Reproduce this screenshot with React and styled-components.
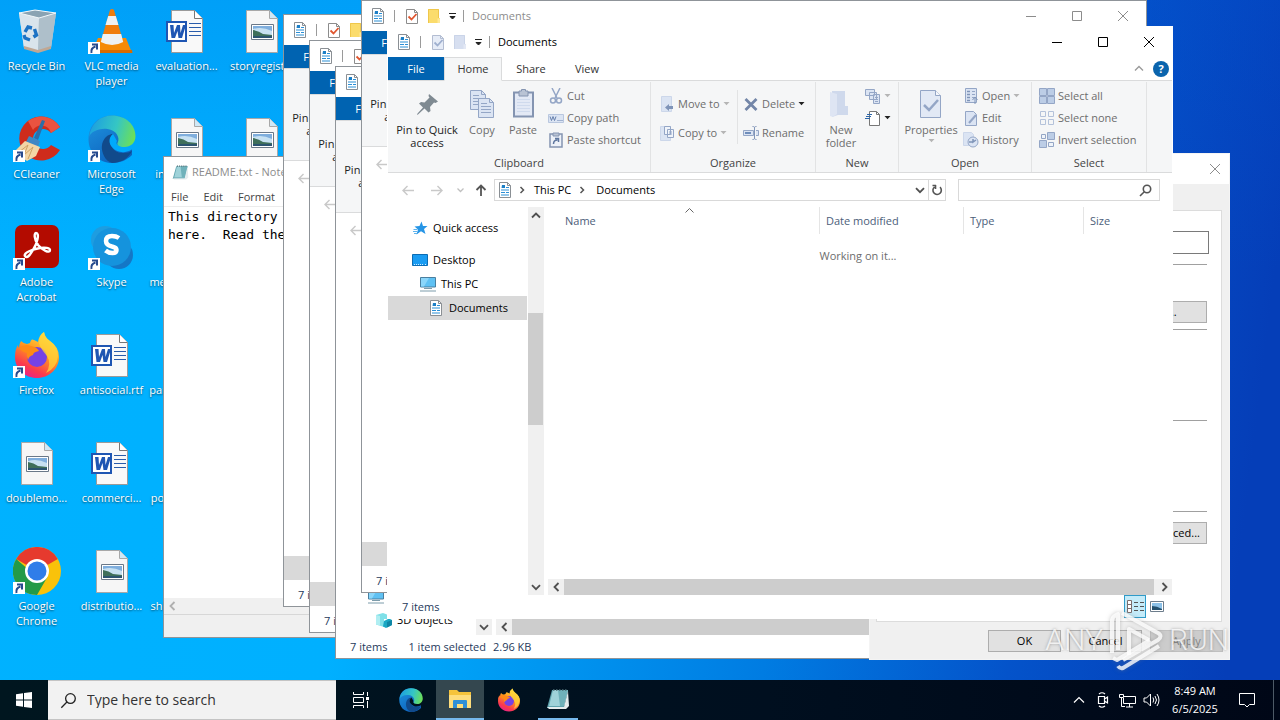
import React from 'react';
import styled, { createGlobalStyle } from 'styled-components';

const GlobalStyle = createGlobalStyle`
  * {
    box-sizing: border-box;
  }

  body {
    margin: 0;
    overflow: hidden;
    font-family: 'Open Sans', 'Noto Sans', sans-serif;
    font-size: 11px;
    line-height: 16px;
    color: #000;
  }

  button,
  input,
  textarea {
    font: inherit;
    color: inherit;
    margin: 0;
    padding: 0;
    border: 0;
    background: none;
    outline: none;
  }

  svg {
    display: block;
    flex: none;
  }
`;

/* ---------- desktop ---------- */

const Screen = styled.div`
  height: 100vh;
  display: flex;
  flex-direction: column;
`;

const Desktop = styled.main`
  position: relative;
  flex: 1;
  min-height: 0;
  overflow: hidden;
  background:
    linear-gradient(180deg, rgba(0, 90, 220, 0.2), rgba(0, 90, 220, 0) 40%),
    linear-gradient(97deg, #00b2ff 0%, #00b0ff 30%, #007ce2 62%, #0453ca 80%, #053eb8 96%);
`;

const IconGrid = styled.div`
  display: grid;
  grid-auto-flow: column;
  grid-template-rows: repeat(6, 108px);
  grid-auto-columns: 75px;
  width: max-content;
`;

const Shortcut = styled.button`
  position: relative;
  display: flex;
  flex-direction: column;
  align-items: center;
  gap: 3px;
  padding: 7px 2px 0 0;
  color: #fff;
  line-height: 15px;
  text-shadow: 0 1px 2px rgba(0, 0, 0, 0.6);

  span {
    white-space: pre;
  }
`;

const ShortcutArrow = styled.svg`
  position: absolute;
  left: 13px;
  top: 42px;
`;

/* ---------- window frame ---------- */

const Frame = styled.section`
  position: absolute;
  left: ${({ $x }) => $x}px;
  top: ${({ $y }) => $y}px;
  width: ${({ $w }) => $w}px;
  height: ${({ $h }) => $h}px;
  display: flex;
  flex-direction: column;
  overflow: hidden;
  background: #fff;
  border: 1px solid ${({ $edge }) => $edge || '#8f9499'};
`;

const TitleBar = styled.header`
  display: flex;
  align-items: center;
  flex: none;
  height: 30px;
  color: ${({ $active }) => ($active ? '#000' : '#8c8c8c')};
`;

const QuickBar = styled.div`
  display: flex;
  align-items: center;
  padding-left: 8px;
`;

const QuickSlot = styled.button`
  display: flex;
  justify-content: center;
  width: ${({ $w }) => $w}px;
`;

const Bar = styled.i`
  width: 1px;
  height: ${({ $h }) => $h || 12}px;
  background: ${({ $c }) => $c || '#9a9a9a'};
`;

const WindowTitle = styled.h2`
  flex: 1;
  margin: 0;
  padding-left: 3px;
  font-size: 11px;
  font-weight: 400;
  white-space: nowrap;
`;

const Caption = styled.button`
  display: flex;
  justify-content: center;
  align-items: center;
  width: 46px;
  height: 29px;
`;

/* ---------- ribbon ---------- */

const Tabs = styled.nav`
  display: flex;
  flex: none;
  height: 24px;
  border-bottom: 1px solid #dadbdc;
  color: #333;
`;

const Tab = styled.button`
  width: ${({ $w }) => $w}px;
  height: 24px;
  ${({ $kind }) => $kind === 'file' && 'background: #0063b1; color: #fff; height: 23px;'}
  ${({ $kind }) =>
    $kind === 'open' && 'background: #f5f6f7; border: 1px solid #dadbdc; border-bottom-color: #f5f6f7;'}
`;

const TabEnd = styled.div`
  display: flex;
  align-items: center;
  gap: 9px;
  margin-left: auto;
  padding-right: 3px;
`;

const Help = styled.button`
  width: 16px;
  height: 16px;
  border-radius: 50%;
  background: #0a64ad;
  color: #fff;
  font-weight: 700;
  line-height: 16px;
`;

const RibbonBody = styled.div`
  display: flex;
  flex: none;
  height: 92px;
  padding-top: 1px;
  background: #f5f6f7;
  border-bottom: 1px solid #dadbdc;
`;

const Group = styled.div`
  display: flex;
  flex-direction: column;
  flex: none;
  width: ${({ $w }) => $w}px;
  border-right: 1px solid #e2e3e4;

  h3 {
    margin: 0;
    font-size: 11px;
    font-weight: 400;
    text-align: center;
    color: #444;
  }
`;

const Tools = styled.div`
  display: flex;
  height: 73px;
  padding-left: ${({ $pad }) => $pad || 2}px;
`;

const BigTool = styled.button`
  display: flex;
  flex-direction: column;
  align-items: center;
  width: ${({ $w }) => $w}px;
  padding-top: 6px;
  gap: 3px;
  line-height: 13px;
  color: ${({ $on }) => ($on ? '#222' : '#6d6d6d')};

  span {
    white-space: pre;
  }
`;

const ToolColumn = styled.div`
  display: flex;
  flex-direction: column;
  padding-top: ${({ $tall }) => ($tall ? 7 : 3)}px;
  margin-left: ${({ $gap }) => $gap || 0}px;
  width: ${({ $w }) => ($w ? `${$w}px` : 'auto')};

  button {
    display: flex;
    align-items: center;
    gap: 3px;
    height: ${({ $tall }) => ($tall ? 29 : 22)}px;
    color: #6d6d6d;
    white-space: nowrap;
  }
`;

const ToolDivider = styled.i`
  width: 1px;
  height: 54px;
  margin-top: 8px;
  background: #e2e3e4;
`;

/* ---------- address bar ---------- */

const AddressRow = styled.div`
  display: flex;
  align-items: center;
  flex: none;
  height: 34px;
  padding: 0 12px 0 5px;
`;

const NavArrow = styled.button`
  display: flex;
  justify-content: center;
  width: ${({ $w }) => $w}px;
`;

const Crumbs = styled.div`
  display: flex;
  align-items: center;
  flex: 1;
  height: 22px;
  margin: 0 12px 0 2px;
  padding-left: 2px;
  border: 1px solid #d9d9d9;
`;

const Crumb = styled.button`
  padding-left: 3px;
`;

const CrumbTail = styled.div`
  display: flex;
  align-items: center;
  height: 20px;
  margin-left: auto;

  button {
    display: flex;
    align-items: center;
    justify-content: center;
    width: 17px;
    height: 20px;
  }

  button + button {
    border-left: 1px solid #d9d9d9;
  }
`;

const SearchBox = styled.label`
  display: flex;
  align-items: center;
  width: 202px;
  height: 22px;
  padding-right: 7px;
  border: 1px solid #d9d9d9;

  input {
    flex: 1;
    min-width: 0;
  }
`;

/* ---------- explorer body ---------- */

const Body = styled.div`
  display: flex;
  flex: 1;
  min-height: 0;
`;

const Tree = styled.ul`
  display: flex;
  flex-direction: column;
  justify-content: ${({ $end }) => ($end ? 'flex-end' : 'flex-start')};
  width: 139px;
  margin: 0;
  padding: ${({ $end }) => ($end ? '0 0 3px' : '9px 0 0')};
  list-style: none;
`;

const TreeRow = styled.li`
  display: flex;
  align-items: center;
  gap: 5px;
  height: 24px;
  flex: none;
  margin-bottom: ${({ $space }) => ($space ? 8 : 0)}px;
  padding-left: ${({ $level }) => 24 + $level * 8}px;
  background: ${({ $selected }) => ($selected ? '#d9d9d9' : 'transparent')};
  white-space: nowrap;
`;

const VScroll = styled.div`
  display: flex;
  flex-direction: column;
  justify-content: space-between;
  width: 16px;
  margin-left: 1px;
  background: #f0f0f0;
`;

const HScroll = styled.div`
  display: flex;
  flex: none;
  height: 16px;
  margin-left: ${({ $gap }) => $gap}px;
  background: #f0f0f0;
`;

const ScrollArrow = styled.button`
  display: flex;
  align-items: center;
  justify-content: center;
  width: 16px;
  height: 16px;
`;

const VTrack = styled.div`
  flex: 1;
  padding-top: 90px;
`;

const Thumb = styled.div`
  background: #cdcdcd;
  ${({ $h }) => ($h ? `height: ${$h}px; width: 15px;` : 'flex: 1; margin-right: 2px;')}
`;

const Pane = styled.div`
  display: flex;
  flex-direction: column;
  flex: 1;
  min-width: 0;
`;

const Listing = styled.div`
  position: relative;
  flex: 1;

  p {
    margin: 14px 0 0;
    text-align: center;
    color: #6d6d6d;
  }
`;

const Columns = styled.table`
  width: 100%;
  table-layout: fixed;
  border-collapse: separate;
  border-spacing: 0;
`;

const Heading = styled.th`
  width: ${({ $w }) => ($w ? `${$w}px` : 'auto')};
  height: 27px;
  padding: 0 0 0 ${({ $first }) => ($first ? 21 : 6)}px;
  font-weight: 400;
  text-align: left;
  color: #4c607a;
  border-right: ${({ $w }) => ($w ? '1px solid #e5e5e5' : 0)};
`;

const SortMark = styled.svg`
  position: absolute;
  left: 141px;
  top: 1px;
`;

const Status = styled.footer`
  display: flex;
  align-items: center;
  flex: none;
  height: 23px;
  padding: 0 4px 0 14px;
  gap: 21px;
  color: #1e395b;

  div {
    display: flex;
    align-items: center;
    margin-left: auto;
  }
`;

const Selection = styled.span`
  display: flex;
  gap: 7px;
`;

const ViewButton = styled.button`
  display: flex;
  align-items: center;
  justify-content: center;
  width: 22px;
  height: 23px;
  ${({ $on }) => $on && 'background: #c4ebf9; border: 1px solid #2f9bc9;'}
`;

/* ---------- notepad ---------- */

const MenuBar = styled.nav`
  display: flex;
  align-items: center;
  flex: none;
  gap: 15px;
  height: 20px;
  padding-left: 7px;
  border-bottom: 1px solid #ececec;
  color: #444;
`;

const NoteText = styled.textarea`
  flex: 1;
  padding: 1px 4px;
  resize: none;
  overflow: hidden;
  font-family: 'DejaVu Sans Mono', monospace;
  font-size: 13px;
  line-height: 18px;
  white-space: pre;
`;

const NoteStatus = styled.div`
  flex: none;
  height: 23px;
  background: #f0f0f0;
  border-top: 1px solid #d7d7d7;
`;

/* ---------- properties dialog ---------- */

const DialogTabs = styled.div`
  flex: none;
  height: 26px;
  background: #f0f0f0;
`;

const Sheet = styled.div`
  display: flex;
  flex-direction: column;
  flex: 1;
  margin: 0 7px 0 6px;
  padding: 20px 14px 0 12px;
  border: 1px solid #dcdcdc;
  background: #fff;
`;

const SheetWrap = styled.div`
  display: flex;
  flex: 1;
  background: #f0f0f0;
`;

const NameInput = styled.input`
  height: 23px;
  margin-right: -2px;
  border: 1px solid #7a7a7a;
`;

const Rule = styled.hr`
  width: 100%;
  height: 1px;
  margin: ${({ $top }) => $top}px 0 0;
  border: 0;
  background: #a0a0a0;
`;

const PushButton = styled.button`
  flex: none;
  width: ${({ $w }) => $w || 73}px;
  height: 22px;
  border: 1px solid ${({ disabled }) => (disabled ? '#bfbfbf' : '#adadad')};
  background: ${({ disabled }) => (disabled ? '#cccccc' : '#e1e1e1')};
  color: ${({ disabled }) => (disabled ? '#838383' : '#000')};
`;

const SheetButton = styled(PushButton)`
  align-self: flex-end;
  margin-top: ${({ $top }) => $top}px;
`;

const DialogFooter = styled.footer`
  display: flex;
  justify-content: flex-end;
  flex: none;
  gap: 8px;
  height: 37px;
  padding: 8px 6px 0 0;
  background: #f0f0f0;
`;

/* ---------- watermark ---------- */

const Watermark = styled.div`
  position: absolute;
  right: 51px;
  bottom: 8px;
  display: flex;
  align-items: center;
  gap: 6px;
  height: 64px;
  font-family: Roboto, sans-serif;
  font-size: 30px;
  font-weight: 300;
  line-height: 64px;
  color: rgba(255, 255, 255, 0.8);
  text-shadow: 0 0 3px rgba(110, 110, 110, 0.6);
  pointer-events: none;
`;

const PlayMark = styled.svg`
  filter: drop-shadow(0 0 2px rgba(120, 120, 120, 0.5));
`;

/* ---------- taskbar ---------- */

const Taskbar = styled.footer`
  display: flex;
  flex: none;
  height: 40px;
  color: #fff;
  background: linear-gradient(90deg, #00161f, #000f1f 60%, #000717);
`;

const TaskButton = styled.button`
  display: flex;
  align-items: center;
  justify-content: center;
  width: ${({ $w }) => $w}px;
  margin-left: ${({ $gap }) => $gap || 0}px;
  background: ${({ $active }) => ($active ? '#34474f' : 'transparent')};
  border-bottom: ${({ $open }) => ($open ? '2px solid #76b9ed' : '0')};
`;

const TaskSearch = styled.label`
  display: flex;
  align-items: center;
  gap: 10px;
  width: 288px;
  padding-left: 12px;
  background: #f2f2f2;
  border: 1px solid #c4c4c4;
  border-width: 1px 0;

  input {
    flex: 1;
    min-width: 0;
    font-size: 14px;
  }

  input::placeholder {
    color: #333;
    opacity: 1;
  }
`;

const Tray = styled.div`
  display: flex;
  align-items: center;
  margin-left: auto;
`;

const TrayButton = styled.button`
  display: flex;
  justify-content: center;
  width: ${({ $w }) => $w || 24}px;
`;

const Clock = styled.time`
  width: 64px;
  line-height: 18px;
  text-align: center;
`;

/* ---------- small glyphs ---------- */

const Glyph = ({ w = 10, h = 10, d, c = '#555', s = 1, fill = 'none' }) => (
  <svg width={w} height={h} viewBox={`0 0 ${w} ${h}`} aria-hidden="true">
    <path d={d} fill={fill} stroke={c} strokeWidth={s} />
  </svg>
);

const Drop = ({ c = '#b5b5b5' }) => <Glyph w={7} h={4} d="M0.5 0h6l-3 3.2z" c="none" fill={c} />;
const ChevronDown = ({ c = '#505050' }) => <Glyph w={10} h={7} d="M1 1.2l4 4 4-4" c={c} s={1.8} />;
const ChevronUp = ({ c = '#505050', s = 1.8 }) => <Glyph w={10} h={7} d="M1 5.5l4-4 4 4" c={c} s={s} />;
const ChevronLeft = ({ c = '#505050' }) => <Glyph w={7} h={10} d="M5.5 1l-4 4 4 4" c={c} s={1.8} />;
const ChevronRight = ({ c = '#505050' }) => <Glyph w={7} h={10} d="M1.5 1l4 4-4 4" c={c} s={1.8} />;
const CrumbArrow = () => <Glyph w={6} h={8} d="M1.5 1l3 3-3 3" c="#555" s={1.5} />;

const DocIcon = () => (
  <svg width="16" height="16" viewBox="0 0 16 16" aria-hidden="true">
    <path d="M2.5 .5h8l3 3v12h-11z" fill="#fff" stroke="#8a8f94" />
    <path d="M10.5 .5v3h3" fill="none" stroke="#8a8f94" />
    <path d="M4 8h8M4 10.500h4M4 13h8" stroke="#2a8fd6" strokeWidth="1.200" />
    <path d="M5 3h3v3H4.500z" fill="#1c7fc6" />
    <path d="M9 5.500h3M9 10.500h3" stroke="#2a8fd6" strokeWidth="1.200" />
  </svg>
);

const CheckDoc = ({ off }) => (
  <svg width="14" height="16" viewBox="0 0 14 16" aria-hidden="true">
    <path d="M1.5 1.5h8l3 3v11h-11z" fill={off ? '#e6ecf7' : '#fff'} stroke={off ? '#b3bdd2' : '#8c8c8c'} />
    <path d="M9.5 1.5v3h3" fill="none" stroke={off ? '#b3bdd2' : '#8c8c8c'} />
    <path d="M3.5 8.5l3 3 5-5.5" fill="none" stroke={off ? '#9fb0cf' : '#e0562f'} strokeWidth="1.8" />
  </svg>
);

const FolderMini = ({ off }) => (
  <svg width="14" height="16" viewBox="0 0 14 16" aria-hidden="true">
    <path d="M1 1h11v9h1v5H1z" fill={off ? '#d7dff0' : '#fbdc6c'} />
    <path d="M1.5 15V1.500h10V10" fill="none" stroke={off ? '#cad4e8' : '#efc74b'} />
    <path d="M10.500 10.500h2.500V15h-2.500z" fill={off ? '#e4e9f5' : '#ffe99a'} />
  </svg>
);

const MonitorIcon = () => (
  <svg width="16" height="16" viewBox="0 0 16 16" aria-hidden="true">
    <path d="M.5 1.500h15v9.500H.5z" fill="#5fc1f3" stroke="#4a7f9f" />
    <path d="M1 2h8L4 10.500H1z" fill="#8bd6fa" />
    <path d="M4 12.500h8M0 15h16" stroke="#7d9cab" />
  </svg>
);

const DesktopIcon = () => (
  <svg width="16" height="16" viewBox="0 0 16 16" aria-hidden="true">
    <path d="M.5 2.500h15v11H.5z" fill="#1a9cf2" stroke="#0c6cb3" />
    <path d="M2 12.500h9M13 12.500h2" stroke="#cfeaff" strokeDasharray="1 1" />
  </svg>
);

const StarIcon = () => (
  <svg width="16" height="16" viewBox="0 0 16 16" aria-hidden="true">
    <path d="M9.500 1.500l1.500 4.500h4.500l-3.500 3 1.500 5-4.500-2.800L4.500 14.500l1.500-5L2.500 6.500l5-.5z" fill="#2695e6" />
    <path d="M1.500 9.500h4M1 11.500h4M2 13.500h3" stroke="#5fb4ee" />
  </svg>
);

const CubeIcon = () => (
  <svg width="16" height="16" viewBox="0 0 16 16" aria-hidden="true">
    <path d="M0 3l7-2 4 1.500v4.500h-3v8L0 12.500z" fill="#7fe0e8" />
    <path d="M0 3l4 1v9.500l-4-1z" fill="#b0eef2" />
    <path d="M8 9l5-2.500 3 1.500v5l-6 3-3-1.500z" fill="#19a8c4" />
    <path d="M11 10l5-2v5l-5 2.500z" fill="#0e86a5" />
  </svg>
);

/* ribbon drawings, all in the greyed-out palette */
const line = '#94a6c6';
const pale = '#dbe4f3';

const Art = ({ size = 16, children }) => (
  <svg width={size} height={size} viewBox={`0 0 ${size} ${size}`} fill={pale} stroke={line} aria-hidden="true">
    {children}
  </svg>
);

const PinArt = () => (
  <Art size={32}>
    <path
      d="M18 6l9 7.500-2.500 1.500-1.500-.5-4 4.500.5 4-2 1.500-4-4-6.500 6-1 .5.500-1.500 5.500-6-4-4 2-1.500 3.500.5 5-5-1-1.500z"
      fill="#7f8a92"
      stroke="none"
    />
  </Art>
);

const CopyArt = () => (
  <Art size={32}>
    <path d="M4.500 2.500h11l4 4v15h-15z" />
    <path d="M15.500 2.500v4h4M7 7.500h6M7 10.500h9M7 13.500h9M7 16.500h9" fill="none" />
    <path d="M12.500 10.500h11l4 4v15h-15z" />
    <path d="M23.500 10.500v4h4M15 15.500h6M15 18.500h10M15 21.500h10M15 24.500h10" fill="none" />
  </Art>
);

const PasteArt = () => (
  <Art size={32}>
    <path d="M7 4.500h19v24H7z" fill="#e3e9f5" stroke="#8494b1" strokeWidth="2" />
    <path d="M12 3h2.500V1.500h4V3H21v5h-9z" fill="#b9c3d4" stroke="#8494b1" />
    <path d="M10 11.500h13M10 14.500h13M10 17.500h13M10 20.500h13M10 23.500h13" stroke="#cfdaed" />
  </Art>
);

const FolderArt = () => (
  <Art size={32}>
    <path d="M7 3h13v15h3v9H13l-6 2z" fill="#cfd9ec" stroke="none" />
    <path d="M5 4l7 2v20l-4 3-3-1z" fill="#dee5f3" stroke="none" />
  </Art>
);

const PropsArt = () => (
  <Art size={32}>
    <path d="M5.500 2.500h15l5 5v22h-20z" fill="#e2e9f5" />
    <path d="M20.500 2.500v5h5" fill="#f5f7fb" />
    <path d="M9 17l5 5 9-10" fill="none" strokeWidth="2.500" />
  </Art>
);

const CutArt = () => (
  <Art>
    <path d="M4 0l5 10M12 0L7 10" strokeWidth="1.500" fill="none" />
    <circle cx="5" cy="12.500" r="2.500" fill="none" strokeWidth="1.500" />
    <circle cx="11" cy="12.500" r="2.500" fill="none" strokeWidth="1.500" />
  </Art>
);
const PathArt = () => (
  <Art>
    <path d="M.5 4.500h15v8H.5z" stroke="#b9c7df" />
    <path d="M2 6.500l1.500 4L5 6.500l1.500 4L8 6.500M9.500 10.500h1M11.500 10.500h1M13.500 10.500h1" fill="none" stroke="#6680ad" />
  </Art>
);
const PasteLinkArt = () => (
  <Art>
    <path d="M2 2h12v13H2z" fill="#edf1f8" stroke="#8494b1" strokeWidth="1.500" />
    <path d="M5 1h6v3H5z" fill="#b9c3d4" stroke="#8494b1" />
    <path d="M5.500 12c0-3 1.500-4 4-4M7 6.500h3.500V10" fill="none" stroke="#5f779f" strokeWidth="1.500" />
  </Art>
);
const MoveArt = () => (
  <Art>
    <path d="M2.500 .5h10v15h-10z" stroke="#ccd7ea" />
    <path d="M6 11.500l4-3.500v2h4v3h-4v2z" fill="#7f94b8" stroke="none" />
  </Art>
);
const CopyToArt = () => (
  <Art>
    <path d="M1.500 1.500h10v14h-10z" stroke="#ccd7ea" />
    <path d="M5.500 1.500h6v8h-6zM8.500 4.500h6v8h-6z" fill="#f0f4fa" />
    <path d="M10 7h3M10 9h3" />
  </Art>
);
const DeleteArt = () => (
  <Art>
    <path d="M2.500 3l11 11M13.500 3l-11 11" stroke="#7386a8" strokeWidth="2.800" />
  </Art>
);
const RenameArt = () => (
  <Art>
    <path d="M.5 5.500h10v5H.5zM13 5.500h2.500v5H13" />
    <path d="M2 8h6" stroke="#6f8dbb" strokeWidth="2" />
    <path d="M9.500 1.500c1.500 0 2 .5 2 1v11c0 .5-.5 1-2 1M13.500 1.500c-1.500 0-2 .5-2 1v11c0 .5.500 1 2 1" fill="none" stroke="#7f94b8" />
  </Art>
);
const NewItemArt = () => (
  <Art>
    <path d="M.5 1.500h9v6h-9zM4.500 4.500h7v7h-7zM8.500 6.500h6v9h-6z" />
    <path d="M10 9.500h3M10 11.500h3M10 13.500h3" />
  </Art>
);
const EasyArt = () => (
  <Art>
    <path d="M4.500 1.500h7l3 3v11h-10z" fill="#fff" stroke="#777" />
    <path d="M11.500 1.500v3h3" fill="none" stroke="#777" />
    <path d="M2 4.500h5M1 6.500h5M0 8.500h5" stroke="#2d66a8" />
  </Art>
);
const OpenArt = () => (
  <Art>
    <path d="M2.500 .5h11v14h-11z" />
    <path d="M4 3.500h3M4 6.500h3M4 9.500h3M4 12.500h3" stroke="#7f94b8" strokeWidth="1.500" />
    <path d="M9 3.500h3M9 6.500h3M9 9.500h2" />
    <path d="M12 16v-6M9.500 12l2.500-3 2.500 3" fill="none" stroke="#7f94b8" />
  </Art>
);
const EditArt = () => (
  <Art>
    <path d="M2.500 1.500h8l3 3v11h-11z" />
    <path d="M6 13l7-8" strokeWidth="2" />
  </Art>
);
const HistoryArt = () => (
  <Art>
    <path d="M.5 .5h8l2 2v11H.5z" stroke="#ccd7ea" />
    <circle cx="10" cy="10" r="5" />
    <path d="M10 7v3l3-2M6 10h4" fill="none" stroke="#7f94b8" strokeWidth="1.500" />
  </Art>
);
const SelectAllArt = () => (
  <Art>
    <path d="M.5 .5h7v7h-7zM8.500 .5h7v7h-7zM.5 8.500h7v7h-7zM8.500 8.500h7v7h-7z" fill="#bccde6" />
  </Art>
);
const SelectNoneArt = () => (
  <Art>
    <path d="M1.500 1.500h5v5h-5zM9.500 1.500h5v5h-5zM1.500 9.500h5v5h-5zM9.500 9.500h5v5h-5z" fill="none" stroke="#b4c2da" />
  </Art>
);
const InvertArt = () => (
  <Art>
    <path d="M2.500 2.500h4v4h-4zM9.500 10.500h5v4h-5z" fill="#f0f4fa" />
    <path d="M8.500 .5h7v7h-7zM.5 8.500h7v7h-7z" fill="#bccde6" />
  </Art>
);

const Magnifier = ({ size = 13, c = '#555', s = 1.6 }) => (
  <svg width={size} height={size} viewBox="0 0 13 13" fill="none" stroke={c} strokeWidth={s} aria-hidden="true">
    <circle cx="8" cy="5" r="3.700" />
    <path d="M5.300 7.700L1 12" />
  </svg>
);

/* ---------- large icons ---------- */

const Big = ({ children, size = 48, viewBox = '0 0 48 48' }) => (
  <svg width={size} height={size} viewBox={viewBox} aria-hidden="true">
    {children}
  </svg>
);

const RecycleBin = () => (
  <Big>
    <path d="M6 6l16-3 21 3-5 35-13 4-14-4z" fill="#c3d3de" />
    <path d="M6 6l20 5-1 34-14-4z" fill="#d9e4ec" />
    <path d="M26 11l17-5-5 35-13 4z" fill="#aebfca" />
    <path d="M6 6l16-3 21 3-17 5z" fill="#8aa3b3" stroke="#f2f7fa" />
    <path d="M11 39l14 4 13-4v3l-13 4-14-4z" fill="#bfa794" />
    <g fill="none" stroke="#1c72c4" strokeWidth="3.400">
      <path d="M12 25l3-5 4 1M21.500 22l2 6-3 2M17 33l-5-2-1-3" />
    </g>
  </Big>
);

const Vlc = () => (
  <Big>
    <path d="M7 38l3-7h28l6 15H8z" fill="#f58a07" />
    <path d="M8 43h36l.5 3H8z" fill="#d96b00" />
    <path d="M22 3q2-2 4 0l9 31q-11 6-22 0z" fill="#f07c0c" />
    <path d="M20.200 9h7.600l2.700 9h-13z" fill="#eef1f3" />
    <path d="M14.800 27h18.400l2 8q-11 6-22.400 0z" fill="#eef1f3" />
  </Big>
);

const Page = () => (
  <>
    <path d="M8.500 3.500h23l8 8v34h-31z" fill="#f9f9f9" stroke="#9a9a9a" />
    <path d="M31.500 3.500v8h8" fill="#fff" stroke="#777" />
  </>
);

const WordDoc = () => (
  <Big>
    <Page />
    <path d="M26 20.500h12M26 24.500h12M26 28.500h12M26 16.500h12" stroke="#2a5caa" />
    <path d="M3 14h21v21H3z" fill="#1f56b3" />
    <path d="M5 16h17v17H5z" fill="#fff" />
    <path d="M7 18l1.500 13H12l2.500-7 1 7h3.500l4-13h-3l-2.500 8-.5-8h-3l-3 8-.5-8z" fill="#1f56b3" />
  </Big>
);

const PictureDoc = () => (
  <Big>
    <path d="M8.500 3.500h23l8 8v34h-31z" fill="#f6f6f6" stroke="#a8a8a8" />
    <path d="M31.500 3.500v8h8" fill="#cfe8f6" stroke="#a8a8a8" />
    <path d="M13.500 17.500h22v15h-22z" fill="#fff" stroke="#6a7888" />
    <path d="M15 19h19v12H15z" fill="#7faedd" />
    <path d="M15 22q9-3 19 2v4H15z" fill="#c7e1f2" />
    <path d="M15 23q6 1 10 4l9 1v3H15z" fill="#3f6f5a" />
    <path d="M15 29h19v2H15z" fill="#2c5470" />
  </Big>
);

const CCleaner = () => (
  <Big>
    <path d="M47 12A22 22 0 1 0 47 35L38 30A10 10 0 1 1 38 18z" fill="#cf2c1c" />
    <path d="M47 12A22 22 0 0 0 15 6l5 9a10 10 0 0 1 18 3z" fill="#ea5340" />
    <path d="M29 5l3 1-7 19-4-2z" fill="#2b6ea9" />
    <path d="M16 21l11 5-2 6-12-5z" fill="#3f87c4" />
    <path d="M12 26l15 6-4 9-9 5L1 37z" fill="#f3d6a6" />
    <path d="M6 37l9-7-4 10 9-8-5 12" fill="none" stroke="#cfa265" />
  </Big>
);

const EdgeArt = ({ size = 48 }) => (
  <Big size={size}>
    <defs>
      <linearGradient id="edge-top" x1="0" y1=".4" x2="1" y2=".6">
        <stop offset="0" stopColor="#1c9fe0" />
        <stop offset=".55" stopColor="#35c6c4" />
        <stop offset="1" stopColor="#6ee055" />
      </linearGradient>
      <linearGradient id="edge-low" x1="0" y1="0" x2=".6" y2="1">
        <stop offset="0" stopColor="#1f95e0" />
        <stop offset="1" stopColor="#0d62bd" />
      </linearGradient>
      <mask id="edge-cut">
        <path d="M0 0h48v48H0z" fill="#fff" />
        <path d="M25 19c-5 4-4 10-1 13 4 5 12 7 19 3l5-3v-6l-13 5c-5 0-8-2-6-5z" fill="#000" />
      </mask>
    </defs>
    <g mask="url(#edge-cut)">
      <path d="M24 .5C37 .5 44 8 44 20v20c-5 5-12 8-20 8C11 48 .5 38 .5 24S11 .5 24 .5z" fill="url(#edge-low)" />
      <path d="M16 41C10 28 18 19 25 19c-6 6-2 19 10 19 4 0 7-1 9-2-3 7-11 12-20 12-3-1-6-3-8-7z" fill="#114a8b" />
    </g>
    <path d="M1 22C3 8 13 .5 24 .5 38 .5 47.500 10 47.500 21c0 7-5 11-11 11-5 0-8-2-7-4 3-5-1-13-10-14C10 13 3 17 1 22z" fill="url(#edge-top)" />
  </Big>
);

const Acrobat = () => (
  <Big>
    <rect x="2" y="2" width="44" height="43" rx="7" fill="#b30b00" />
    <path
      d="M12 33c-2-3 8-7 15-8 5-1 10 0 10 2 0 4-8 0-12-5-4-6-4-12-2-12 4 0 1 11-3 17-3 5-6 9-8 6z"
      fill="none"
      stroke="#fff"
      strokeWidth="2.400"
    />
  </Big>
);

const Skype = () => (
  <Big>
    <circle cx="17" cy="17" r="14" fill="#1e9de0" />
    <circle cx="31" cy="32" r="14" fill="#1477c6" />
    <circle cx="24" cy="24" r="19" fill="#1593dd" />
    <path d="M31 15q-3-2-7-2-6 0-6 5 0 4 6 5.500 4.500 1 4.500 3.500 0 3-4 3t-7-2.500" fill="none" stroke="#fff" strokeWidth="4.500" />
  </Big>
);

const FirefoxArt = ({ size = 48 }) => (
  <Big size={size}>
    <defs>
      <linearGradient id="fox" x1=".8" y1="0" x2=".3" y2="1">
        <stop offset="0" stopColor="#fff04d" />
        <stop offset=".45" stopColor="#ff9a1f" />
        <stop offset=".8" stopColor="#fb3a4d" />
        <stop offset="1" stopColor="#e9218a" />
      </linearGradient>
    </defs>
    <path
      d="M8 10q3 3 6 3l3-1q1-5 4-3 2 1 4 2Q26 4 31 1q1 6 6 9 9 6 9 16c0 12-10 21-22 21S2 38 2 26q0-8 3-12 0 2 1 3 0-4 2-7z"
      fill="url(#fox)"
    />
    <circle cx="24" cy="26" r="10" fill="#7542e5" />
    <path d="M6 17q6-5 12-2 6 1 8 5-6 1-6 4-4 1-5 5-2-4-1-7-5-1-8-5z" fill="#ff8a16" />
    <path d="M31 1q1 6 6 9 8 6 8 15-1 12-12 17 6-9 1-17-7-8-8-13 0-7 5-11z" fill="#ffd43a" opacity=".75" />
  </Big>
);

const Chrome = () => (
  <Big>
    <circle cx="24" cy="24" r="24" fill="#f9c20a" />
    <path d="M24 24L3.200 12A24 24 0 0 1 44.800 12z" fill="#e63a2e" />
    <path d="M3.200 12A24 24 0 0 0 24 48l10.400-18H24z" fill="#239a48" />
    <circle cx="24" cy="24" r="12" fill="#fff" />
    <circle cx="24" cy="24" r="9.500" fill="#2f7de9" />
  </Big>
);

const NotepadArt = ({ size = 16 }) => (
  <Big size={size} viewBox="0 0 24 24">
    <path d="M6 3h16l-4 18H1z" fill="#5fa3ae" />
    <path d="M7 3h15l-4 16H3z" fill="#9fd2d9" />
    <path d="M12 3h10l-4 16h-4z" fill="#6fb1ba" />
    <path d="M22 4l1 15-3 3H3l-2-2h17z" fill="#e4ecee" />
    <path d="M7 3h15" stroke="#4b6a72" strokeWidth="1.500" strokeDasharray="1.500 1.500" />
  </Big>
);

const ExplorerArt = () => (
  <Big size={24} viewBox="0 0 24 24">
    <path d="M1 3h8l2 2h12v16H1z" fill="#f5c33b" />
    <path d="M1 8h22v13H1z" fill="#fedd7c" />
    <path d="M5 21v-7q0-1 1-1h12q1 0 1 1v7h-4v-4H9v4z" fill="#2f8fd6" />
  </Big>
);

const Preview = () => (
  <svg width="14" height="11" viewBox="0 0 14 11" aria-hidden="true">
    <path d="M.5 .5h13v10H.5z" fill="#fff" stroke="#6d7d8c" />
    <path d="M2 2h10v7H2z" fill="#8cc1e8" />
    <path d="M2 5q5 0 10 3v1H2z" fill="#24506e" />
  </svg>
);

const DetailsView = () => (
  <svg width="18" height="15" viewBox="0 0 18 15" aria-hidden="true">
    <path d="M1.500 1.500h4v12h-4zM1.500 5.500h4M1.500 9.500h4" fill="#fff" stroke="#7b6c6c" />
    <path d="M8 3.500h4M14 3.500h4M8 7.500h4M14 7.500h4M8 11.500h4M14 11.500h4" stroke="#555" />
  </svg>
);

/* ---------- data ---------- */

const shortcuts = [
  { name: 'Recycle Bin', art: <RecycleBin /> },
  { name: 'CCleaner', art: <CCleaner />, link: true },
  { name: 'Adobe\nAcrobat', art: <Acrobat />, link: true },
  { name: 'Firefox', art: <FirefoxArt />, link: true },
  { name: 'doublemo...', art: <PictureDoc /> },
  { name: 'Google\nChrome', art: <Chrome />, link: true },
  { name: 'VLC media\nplayer', art: <Vlc />, link: true },
  { name: 'Microsoft\nEdge', art: <EdgeArt />, link: true },
  { name: 'Skype', art: <Skype />, link: true },
  { name: 'antisocial.rtf', art: <WordDoc /> },
  { name: 'commerci...', art: <WordDoc /> },
  { name: 'distributio...', art: <PictureDoc /> },
  { name: 'evaluation...', art: <WordDoc /> },
  { name: 'informatio...', art: <PictureDoc /> },
  { name: 'membership...', art: <PictureDoc /> },
  { name: 'parameters.rtf', art: <PictureDoc /> },
  { name: 'portugaland...', art: <PictureDoc /> },
  { name: 'shippingand...', art: <PictureDoc /> },
  { name: 'storyregist...', art: <PictureDoc /> },
  { name: 'summary.png', art: <PictureDoc /> },
];

const treeTop = [
  { name: 'Quick access', icon: <StarIcon />, level: 0, space: true },
  { name: 'Desktop', icon: <DesktopIcon />, level: 0 },
  { name: 'This PC', icon: <MonitorIcon />, level: 1 },
  { name: 'Documents', icon: <DocIcon />, level: 2, selected: true },
];

const treeObjects = [
  { name: 'This PC', icon: <MonitorIcon />, level: 1 },
  { name: '3D Objects', icon: <CubeIcon />, level: 2 },
];

const treeEnd = [{ name: 'Documents', icon: <DocIcon />, level: 4, selected: true }];

/* ---------- parts ---------- */

const Captions = ({ active }) => {
  const c = active ? '#000' : '#8c8c8c';
  return (
    <>
      <Caption aria-label="Minimize"><Glyph d="M0 5.500h10" c={c} /></Caption>
      <Caption aria-label="Maximize"><Glyph d="M.5 .5h9v9h-9z" c={c} /></Caption>
      <Caption aria-label="Close"><Glyph d="M0 0l10 10M10 0L0 10" c={c} /></Caption>
    </>
  );
};

const ClipboardGroup = ({ full }) => (
  <Group $w={263}>
    <Tools $pad={3}>
      <BigTool $w={72} $on><PinArt /><span>{'Pin to Quick\naccess'}</span></BigTool>
      {full && (
        <>
          <BigTool $w={38}><CopyArt /><span>Copy</span></BigTool>
          <BigTool $w={44}><PasteArt /><span>Paste</span></BigTool>
          <ToolColumn $gap={3}>
            <button><CutArt />Cut</button>
            <button><PathArt />Copy path</button>
            <button><PasteLinkArt />Paste shortcut</button>
          </ToolColumn>
        </>
      )}
    </Tools>
    {full && <h3>Clipboard</h3>}
  </Group>
);

const MoreGroups = () => (
  <>
    <Group $w={165}>
      <Tools $pad={8}>
        <ToolColumn $tall $w={78}>
          <button><MoveArt />Move to<Drop /></button>
          <button><CopyToArt />Copy to<Drop /></button>
        </ToolColumn>
        <ToolDivider />
        <ToolColumn $tall $gap={5}>
          <button><DeleteArt />Delete<Drop c="#222" /></button>
          <button><RenameArt />Rename</button>
        </ToolColumn>
      </Tools>
      <h3>Organize</h3>
    </Group>
    <Group $w={83}>
      <Tools>
        <BigTool $w={46}><FolderArt /><span>{'New\nfolder'}</span></BigTool>
        <ToolColumn $gap={1}>
          <button aria-label="New item"><NewItemArt /><Drop /></button>
          <button aria-label="Easy access"><EasyArt /><Drop c="#222" /></button>
        </ToolColumn>
      </Tools>
      <h3>New</h3>
    </Group>
    <Group $w={133}>
      <Tools>
        <BigTool $w={60}><PropsArt /><span>Properties</span><Drop /></BigTool>
        <ToolColumn $gap={2}>
          <button><OpenArt />Open<Drop /></button>
          <button><EditArt />Edit</button>
          <button><HistoryArt />History</button>
        </ToolColumn>
      </Tools>
      <h3>Open</h3>
    </Group>
    <Group $w={115}>
      <Tools $pad={7}>
        <ToolColumn>
          <button><SelectAllArt />Select all</button>
          <button><SelectNoneArt />Select none</button>
          <button><InvertArt />Invert selection</button>
        </ToolColumn>
      </Tools>
      <h3>Select</h3>
    </Group>
  </>
);

const AddressFields = () => (
  <>
    <NavArrow $w={29} aria-label="Forward"><Glyph w={12} h={11} d="M0 5.500h11M6.500 1L11 5.500 6.500 10" c="#c9c9c9" s={1.4} /></NavArrow>
    <NavArrow $w={19} aria-label="Recent"><Glyph w={7} h={5} d="M.5 .5l3 3 3-3" c="#c0c0c0" s={1.3} /></NavArrow>
    <NavArrow $w={22} aria-label="Up"><Glyph w={12} h={12} d="M6 12V1M1.500 6L6 1.500 10.500 6" c="#555" s={1.8} /></NavArrow>
    <Crumbs>
      <DocIcon />
      <NavArrow $w={18} as="span"><CrumbArrow /></NavArrow>
      <Crumb>This PC</Crumb>
      <NavArrow $w={22} as="span"><CrumbArrow /></NavArrow>
      <Crumb>Documents</Crumb>
      <CrumbTail>
        <button aria-label="Previous locations"><ChevronDown /></button>
        <button aria-label="Refresh">
          <Glyph w={12} h={12} d="M3.500 3A4.200 4.200 0 1 0 9 3.200M4.500 1v4M1.500 1.500h3.500" c="#555" s={1.6} />
        </button>
      </CrumbTail>
    </Crumbs>
    <SearchBox>
      <input aria-label="Search Documents" />
      <Magnifier />
    </SearchBox>
  </>
);

// Windows further down the stack only show their left edge and bottom bar.
const Explorer = ({ x, y, active, titled, tree, treeAtEnd, selection, thumb, children }) => (
  <Frame $x={x} $y={y} $w={786} $h={593} $edge={active ? '#fff' : undefined}>
    <TitleBar $active={active}>
      <QuickBar>
        <DocIcon />
        <QuickSlot $w={17} as="span"><Bar /></QuickSlot>
        <QuickSlot $w={18} aria-label="Properties"><CheckDoc off={active} /></QuickSlot>
        <QuickSlot $w={26} aria-label="New folder"><FolderMini off={active} /></QuickSlot>
        <QuickSlot $w={10} aria-label="Customize">
          <Glyph w={7} h={7} d="M0 .5h7M1 3.500h5L3.500 6z" c="#222" fill="#222" />
        </QuickSlot>
        <QuickSlot $w={12} as="span"><Bar /></QuickSlot>
      </QuickBar>
      {(active || titled) && (
        <>
          <WindowTitle>Documents</WindowTitle>
          <Captions active={active} />
        </>
      )}
    </TitleBar>
    <Tabs>
      <Tab $w={56} $kind="file">File</Tab>
      {active && (
        <>
          <Tab $w={58} $kind="open">Home</Tab>
          <Tab $w={58}>Share</Tab>
          <Tab $w={54}>View</Tab>
          <TabEnd>
            <ChevronUp c="#999" s={1.3} />
            <Help aria-label="Help">?</Help>
          </TabEnd>
        </>
      )}
    </Tabs>
    <RibbonBody>
      <ClipboardGroup full={active} />
      {active && <MoreGroups />}
    </RibbonBody>
    <AddressRow>
      <NavArrow $w={29} aria-label="Back"><Glyph w={12} h={11} d="M12 5.500H1M5.500 1L1 5.500 5.500 10" c="#c9c9c9" s={1.4} /></NavArrow>
      {active && <AddressFields />}
    </AddressRow>
    <Body>
      <Tree $end={treeAtEnd}>
        {tree.map((row) => (
          <TreeRow key={row.name} $level={row.level} $space={row.space} $selected={row.selected}>
            {row.icon}
            {row.name}
          </TreeRow>
        ))}
      </Tree>
      <VScroll>
        <ScrollArrow aria-label="Scroll up"><ChevronUp /></ScrollArrow>
        <VTrack>{thumb && <Thumb $h={thumb} />}</VTrack>
        <ScrollArrow aria-label="Scroll down"><ChevronDown /></ScrollArrow>
      </VScroll>
      <Pane>
        <Listing>
          {active && (
            <>
              <Columns>
                <thead>
                  <tr>
                    <Heading scope="col" $w={276} $first>Name</Heading>
                    <Heading scope="col" $w={144}>Date modified</Heading>
                    <Heading scope="col" $w={120}>Type</Heading>
                    <Heading scope="col">Size</Heading>
                  </tr>
                </thead>
              </Columns>
              <SortMark width="9" height="5" viewBox="0 0 9 5"><path d="M.5 4.500l4-4 4 4" fill="none" stroke="#666" /></SortMark>
            </>
          )}
          {children}
        </Listing>
        <HScroll $gap={4}>
          <ScrollArrow aria-label="Scroll left"><ChevronLeft /></ScrollArrow>
          <Thumb />
          <ScrollArrow aria-label="Scroll right"><ChevronRight /></ScrollArrow>
        </HScroll>
      </Pane>
    </Body>
    <Status>
      <span>7 items</span>
      {selection && (
        <Selection>
          <span>1 item selected</span>
          <span>{selection}</span>
        </Selection>
      )}
      {active && (
        <div>
          <ViewButton $on aria-label="Details"><DetailsView /></ViewButton>
          <ViewButton aria-label="Large icons"><Preview /></ViewButton>
        </div>
      )}
    </Status>
  </Frame>
);

const Notepad = () => (
  <Frame $x={163} $y={156} $w={640} $h={482}>
    <TitleBar>
      <QuickBar><NotepadArt size={17} /></QuickBar>
      <WindowTitle>README.txt - Notepad</WindowTitle>
    </TitleBar>
    <MenuBar>
      <button>File</button>
      <button>Edit</button>
      <button>Format</button>
    </MenuBar>
    <NoteText
      aria-label="README.txt"
      readOnly
      value={'This directory contains\nhere.  Read the notes'}
    />
    <HScroll $gap={0}>
      <ScrollArrow aria-label="Scroll left"><ChevronLeft c="#b0b0b0" /></ScrollArrow>
    </HScroll>
    <NoteStatus />
  </Frame>
);

const FileProperties = () => (
  <Frame $x={869} $y={153} $w={361} $h={507} $edge="#f4f4f4">
    <TitleBar>
      <WindowTitle />
      <Glyph w={10} h={10} d="M0 0l10 10M10 0L0 10" c="#8c8c8c" />
      <QuickSlot $w={9} as="span" />
    </TitleBar>
    <DialogTabs />
    <SheetWrap>
      <Sheet>
        <NameInput aria-label="File name" defaultValue="README" />
        <Rule $top={10} />
        <SheetButton $top={36} $w={108}>Change...</SheetButton>
        <Rule $top={6} />
        <Rule $top={90} />
        <Rule $top={90} />
        <SheetButton $top={10}>Advanced...</SheetButton>
      </Sheet>
    </SheetWrap>
    <DialogFooter>
      <PushButton>OK</PushButton>
      <PushButton>Cancel</PushButton>
      <PushButton disabled>Apply</PushButton>
    </DialogFooter>
  </Frame>
);

const App = () => (
  <Screen>
    <GlobalStyle />
    <Desktop>
      <IconGrid>
        {shortcuts.map((item) => (
          <Shortcut key={item.name}>
            {item.art}
            {item.link && (
              <ShortcutArrow width="12" height="12" viewBox="0 0 12 12">
                <path d="M0 0h12v12H0z" fill="#fff" />
                <path d="M3.500 11q-1-5 4-6.500M4 2.500h5v5" fill="none" stroke="#274b8e" strokeWidth="2" />
              </ShortcutArrow>
            )}
            <span>{item.name}</span>
          </Shortcut>
        ))}
      </IconGrid>

      <Notepad />
      <Explorer x={283} y={14} tree={treeEnd} treeAtEnd />
      <Explorer x={309} y={40} tree={treeEnd} treeAtEnd />
      <Explorer x={335} y={66} tree={treeObjects} treeAtEnd selection="2.96 KB" />
      <FileProperties />
      <Explorer x={361} y={0} titled tree={treeEnd} treeAtEnd />
      <Explorer x={387} y={26} active tree={treeTop} thumb={112}>
        <p>Working on it...</p>
      </Explorer>

      <Watermark>
        <span>ANY</span>
        <PlayMark width="54" height="62" viewBox="0 0 54 62" fill="none" stroke="rgba(255,255,255,.8)" strokeWidth="4" strokeLinejoin="round" aria-hidden="true">
          <path d="M3 44V12q0-4 4-6l2-1v36" />
          <path d="M13 4l36 20q5 3 0 7L14 51" />
          <path d="M20 46V20l20 11" />
          <path d="M4 49l4 2 33-20M50 37L14 59q-3 1-5-2" />
        </PlayMark>
        <span>RUN</span>
      </Watermark>
    </Desktop>

    <Taskbar>
      <TaskButton $w={48} aria-label="Start">
        <svg width="16" height="16" viewBox="0 0 16 16" fill="#fff" aria-hidden="true">
          <path d="M0 2.200L7 1.200v6.300H0zM8 1l8-1v7.500H8zM0 8.500h7v6.300l-7-1zM8 8.500h8V16l-8-1z" />
        </svg>
      </TaskButton>
      <TaskSearch>
        <Magnifier size={17} c="#222" s={1} />
        <input placeholder="Type here to search" aria-label="Type here to search" />
      </TaskSearch>
      <TaskButton $w={50} aria-label="Task view">
        <svg width="17" height="16" viewBox="0 0 17 16" fill="none" stroke="#fff" aria-hidden="true">
          <path d="M.5 0v2.500h10V0M.5 5.500h10v5H.5zM.5 16v-2.500h10V16M14.500 0v4M14.500 9v7" />
          <path d="M13 5h3v3h-3z" fill="#fff" stroke="none" />
        </svg>
      </TaskButton>
      <TaskButton $w={50} aria-label="Microsoft Edge"><EdgeArt size={24} /></TaskButton>
      <TaskButton $w={48} $active $open aria-label="File Explorer"><ExplorerArt /></TaskButton>
      <TaskButton $w={50} aria-label="Firefox"><FirefoxArt size={24} /></TaskButton>
      <TaskButton $w={40} $gap={4} $open aria-label="Notepad"><NotepadArt size={24} /></TaskButton>
      <Tray>
        <TrayButton aria-label="Show hidden icons"><Glyph w={12} h={8} d="M1 6.500l5-5 5 5" c="#fff" s={1.2} /></TrayButton>
        <TrayButton aria-label="Meet now">
          <Glyph w={14} h={16} d="M2.500 4.500h6v7h-6zM8.500 7l3-2v6l-3-2M3 2q3-2.500 6 0M3 14q3 2.500 6 0" c="#fff" s={1.2} />
        </TrayButton>
        <TrayButton aria-label="Network">
          <Glyph w={17} h={15} d="M5 3.500h11.500v7H4.500V5M.5 1.500h4v3h-4zM2.500 4.500v9H6M10.500 11v3M7 14h7" c="#fff" />
        </TrayButton>
        <TrayButton aria-label="Volume">
          <Glyph w={17} h={14} d="M1 5h2.500l4-4v12l-4-4H1zM10 4.500q1.500 2.500 0 5M12 3q3 4 0 8M14 1q4 6 0 12" c="#fff" />
        </TrayButton>
        <Clock>8:49 AM<br />6/5/2025</Clock>
        <TrayButton $w={40} aria-label="Notifications">
          <Glyph w={16} h={16} d="M.5 1.500h15v11h-5l-2.500 2.500-2.500-2.500h-5z" c="#fff" />
        </TrayButton>
        <TrayButton $w={13} aria-label="Show desktop"><Bar $h={40} $c="#4d5a66" /></TrayButton>
      </Tray>
    </Taskbar>
  </Screen>
);

export default App;
